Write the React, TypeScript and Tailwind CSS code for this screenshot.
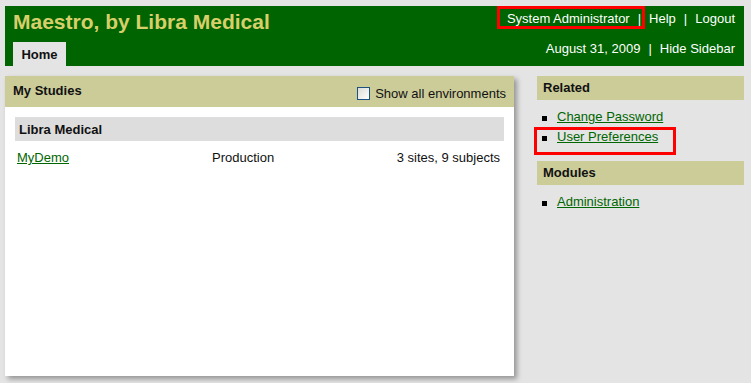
import React from 'react';

const sidebarSections = [
  { title: 'Related', links: ['Change Password', 'User Preferences'] },
  { title: 'Modules', links: ['Administration'] },
];

function Sep() {
  return <span className="mx-[8px]">|</span>;
}

export default function App() {
  return (
    <div className="relative min-h-screen bg-[#e4e4e4] pt-[6px] pl-[5px] pr-[7px] font-['Liberation_Sans',Arial,sans-serif] text-[13px] leading-[15px] text-[#111]">
      {/* header */}
      <div className="bg-[#006400] h-[60px] flex flex-col">
        <div className="h-[36px] flex items-start justify-between pl-[8px] pr-[9px]">
          <h1 className="mt-[4px] text-[21px] leading-[24px] font-bold text-[#d8cf6b]">
            Maestro, by Libra Medical
          </h1>
          <div className="mt-[5px] text-white">
            <span>System Administrator</span>
            <Sep />
            <span>Help</span>
            <Sep />
            <span>Logout</span>
          </div>
        </div>
        <div className="h-[24px] flex items-start justify-between pl-[8px] pr-[9px]">
          <div className="w-[53px] h-[24px] bg-[#e4e4e4] text-center pt-[5px] font-bold text-[#111]">Home</div>
          <div className="-mt-[1px] text-white">
            <span>August 31, 2009</span>
            <Sep />
            <span>Hide Sidebar</span>
          </div>
        </div>
      </div>

      <div className="flex items-start mt-[10px]">
        {/* my studies panel */}
        <div className="w-[509px] h-[300px] bg-white shadow-[3px_3px_5px_rgba(0,0,0,0.35)]">
          <div className="h-[31px] bg-[#cccc99] flex items-start justify-between pl-[8px] pr-[8px]">
            <span className="mt-[7px] font-bold">My Studies</span>
            <label className="mt-[10px] flex items-center">
              <span className="w-[13px] h-[13px] border border-[#1c5180] bg-gradient-to-br from-[#dcdcd7] to-white mr-[5px]" />
              <span>Show all environments</span>
            </label>
          </div>
          <div className="p-[10px]">
            <div className="h-[24px] bg-[#dddddd] pt-[5px] pl-[4px] font-bold">Libra Medical</div>
            <div className="flex pt-[9px]">
              <div className="w-[197px] pl-[2px]">
                <a href="#" className="text-[#006600] underline">MyDemo</a>
              </div>
              <div className="w-[120px]">Production</div>
              <div className="flex-1 text-right pr-[4px]">3 sites, 9 subjects</div>
            </div>
          </div>
        </div>

        {/* sidebar */}
        <div className="ml-[23px] flex-1">
          {sidebarSections.map((s) => (
            <div key={s.title} className="mb-[14px]">
              <div className="h-[24px] bg-[#cccc99] pt-[4px] pl-[6px] font-bold">{s.title}</div>
              <ul className="mt-[7px] pl-[5px]">
                {s.links.map((l) => (
                  <li key={l} className="leading-[20px]">
                    <span className="inline-block w-[5px] h-[5px] bg-black mr-[10px]" />
                    <a href="#" className="text-[#006600] underline">{l}</a>
                  </li>
                ))}
              </ul>
            </div>
          ))}
        </div>
      </div>

      {/* red annotation boxes */}
      <div className="absolute left-[497px] top-[6px] w-[148px] h-[23px] border-[3px] border-[#ff0000]" />
      <div className="absolute left-[534px] top-[127px] w-[142px] h-[28px] border-[3px] border-[#ff0000]" />
    </div>
  );
}
